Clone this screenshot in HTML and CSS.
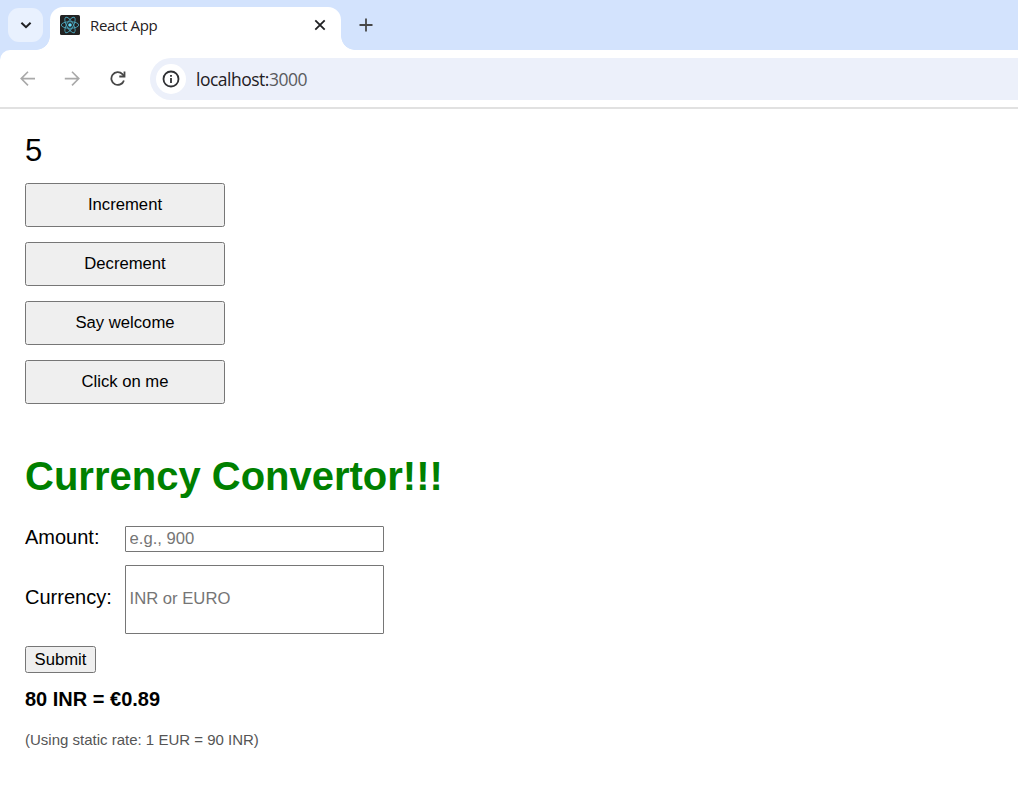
FILE: index.html
```html
<!DOCTYPE html>
<html lang="en">
<head>
<meta charset="utf-8">
<title>React App</title>
<link rel="stylesheet" href="styles.css">
</head>
<body>
<header class="browser">
  <div class="tab-strip">
    <div class="tab-search">
      <svg width="35" height="34" viewBox="0 0 35 34" fill="none" stroke="#1f2023" stroke-width="2"><path d="M13.4 14.7l4.6 4.5 4.6-4.5"/></svg>
    </div>
    <div class="tab">
      <svg class="favicon" width="20" height="20" viewBox="0 0 20 20" fill="none" stroke="#4ba5bb" stroke-width=".9">
        <rect width="20" height="20" rx="1.5" fill="#222" stroke="none"/>
        <ellipse cx="10" cy="10" rx="8.7" ry="3.3"/>
        <ellipse cx="10" cy="10" rx="8.7" ry="3.3" transform="rotate(60 10 10)"/>
        <ellipse cx="10" cy="10" rx="8.7" ry="3.3" transform="rotate(120 10 10)"/>
        <circle cx="10" cy="10" r="1.8" fill="#61dafb" stroke="none"/>
      </svg>
      <span class="tab-title">React App</span>
      <svg class="tab-close" width="12" height="12" viewBox="0 0 12 12" stroke="#1f2023" stroke-width="1.8"><path d="M1.3 1.3l9.4 9.4M10.7 1.3l-9.4 9.4"/></svg>
    </div>
    <svg class="new-tab" width="14" height="14" viewBox="0 0 14 14" stroke="#474747" stroke-width="1.8"><path d="M7 .5v13M.5 7h13"/></svg>
  </div>
  <div class="toolbar">
    <svg class="nav" width="16" height="16" viewBox="0 0 16 16" fill="none" stroke="#a9a9a9" stroke-width="1.6"><path d="M15 7.6H1.5M8 .8L1.2 7.6 8 14.4"/></svg>
    <svg class="nav" width="16" height="16" viewBox="0 0 16 16" fill="none" stroke="#a9a9a9" stroke-width="1.6"><path d="M.8 7.6h13.7M8 .8l6.8 6.8L8 14.4"/></svg>
    <svg class="reload" width="16" height="16" viewBox="0 0 16 16" fill="none" stroke="#474747" stroke-width="1.8"><path d="M13.9 9.4A6.4 6.4 0 1 1 12.4 3.1L14 4.9"/><path d="M14.5.5v5H9.3"/></svg>
    <div class="address">
      <span class="site-info">
        <svg width="18" height="18" viewBox="0 0 18 18" fill="none" stroke="#303134" stroke-width="1.8"><circle cx="9" cy="9" r="7.5"/><path d="M9 8v5M9 4.9v1.9"/></svg>
      </span>
      <span class="url">localhost:<span class="port">3000</span></span>
    </div>
  </div>
</header>
<main class="page">
  <div class="count">5</div>
  <div class="actions">
    <button class="action" type="button">Increment</button>
    <button class="action" type="button">Decrement</button>
    <button class="action" type="button">Say welcome</button>
    <button class="action" type="button">Click on me</button>
  </div>
  <h1 class="title">Currency Convertor!!!</h1>
  <form class="converter">
    <label class="label" for="amount">Amount:</label>
    <input class="field" id="amount" type="text" placeholder="e.g., 900">
    <label class="label label-tall" for="currency">Currency:</label>
    <input class="field field-tall" id="currency" type="text" placeholder="INR or EURO">
    <button class="submit" type="button">Submit</button>
  </form>
  <p class="result">80 INR = €0.89</p>
  <p class="note">(Using static rate: 1 EUR = 90 INR)</p>
</main>
</body>
</html>
```

FILE: styles.css
```css
* { box-sizing: border-box; }
body { margin: 0; background: #fff; color: #000; font-family: "Liberation Sans", Arial, sans-serif; overflow: hidden; }
svg { display: block; flex: none; }
.browser { font-family: "Open Sans", "Segoe UI", sans-serif; background: #d3e3fd; }
.tab-strip { display: flex; height: 50px; padding-left: 8px; }
.tab-search { width: 35px; height: 34px; margin-top: 8px; border-radius: 11px; background: #e9f1fe; }
.tab { position: relative; display: flex; align-items: center; width: 291px; height: 43px; margin: 7px 0 0 7px; padding: 0 15px 7px 10px; border-radius: 13px 13px 0 0; background: #fff; }
.tab::before, .tab::after { content: ""; position: absolute; bottom: 0; width: 14px; height: 14px; }
.tab::before { left: -14px; background: radial-gradient(circle at 0 0, transparent 13.5px, #fff 14.2px); }
.tab::after { right: -14px; background: radial-gradient(circle at 100% 0, transparent 13.5px, #fff 14.2px); }
.tab-title { margin-left: 10px; font-size: 15px; line-height: 20px; letter-spacing: -.32px; color: #1f2023; flex: 1; white-space: nowrap; }
.new-tab { margin: 18px 0 0 18px; }
.toolbar { display: flex; align-items: center; height: 59px; padding-left: 20px; background: #fff; border-bottom: 2px solid #e1e1e1; border-top-left-radius: 10px; }
.nav { margin-right: 28px; }
.reload { margin: 0 24px 0 2px; }
.address { display: flex; align-items: center; flex: 1; height: 42px; padding-left: 6px; border-radius: 21px 0 0 21px; background: #ecf0fa; }
.site-info { display: grid; place-items: center; width: 30px; height: 30px; border-radius: 50%; background: #fff; }
.url { margin-left: 10px; font-size: 17.5px; line-height: 24px; letter-spacing: -.5px; color: #1f2023; }
.port { color: #5a5b5e; }
.page { padding: 24px 25px; }
.count { font-size: 31px; line-height: 36px; }
.actions { display: grid; gap: 15px; width: 200px; margin-top: 14px; }
.action, .submit { border: 1px solid #767676; border-radius: 2.5px; background: #efefef; color: #000; font-family: inherit; font-size: 16.667px; }
.action { height: 44px; padding: 0 0 1px; }
.title { margin: 49px 0 0; font-size: 40px; line-height: 46px; color: #008000; }
.converter { display: grid; grid-template-columns: 100px 259px; align-items: center; margin-top: 27px; row-gap: 13px; }
.label { font-size: 20px; line-height: 23px; padding-bottom: 3px; }
.label-tall { padding-bottom: 5px; }
.field { width: 259px; height: 26px; padding: 0 3.5px; border: 1px solid #767676; border-radius: 1px; background: #fff; font-family: inherit; font-size: 16.667px; }
.field-tall { height: 69px; padding-bottom: 2px; }
.field::placeholder { color: #757575; opacity: 1; }
.submit { grid-column: 1; width: 71px; height: 27px; padding: 0; margin-top: -1px; }
.result { margin: 15px 0 0; font-size: 20px; line-height: 23px; font-weight: bold; }
.note { margin: 20px 0 0; font-size: 15px; line-height: 17px; color: #555; }
```
